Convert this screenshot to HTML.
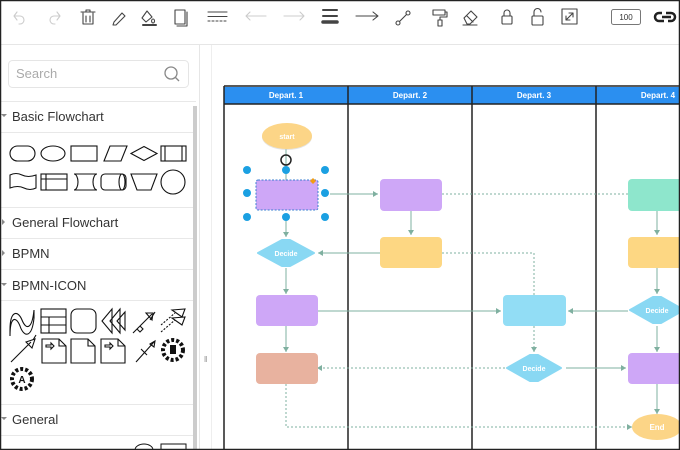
<!DOCTYPE html>
<html><head><meta charset="utf-8"><style>
html,body{margin:0;padding:0;width:680px;height:450px;overflow:hidden;background:#fff;font-family:"Liberation Sans",sans-serif}
svg{display:block}
</style></head><body>
<svg width="680" height="450" viewBox="0 0 680 450" xmlns="http://www.w3.org/2000/svg" font-family="Liberation Sans, sans-serif">
<rect x="0" y="0" width="680" height="450" fill="#fff"/>
<line x1="0" y1="44.5" x2="680" y2="44.5" stroke="#e6e6e6"/>
<g fill="none" stroke="#444" stroke-width="1.1" stroke-linecap="round" stroke-linejoin="round">
 <g stroke="#ccc"><path d="M17 12 l-3 4 3 4 M14 16 h6 a4 4 0 0 1 0 8 h-1"/><path d="M57 12 l3 4 -3 4 M60 16 h-6 a4 4 0 0 0 0 8 h1"/></g>
 <path d="M81 12 h14 M86 12 v-2 h4 v2 M83 13 v11 h10 v-11 M86 16 v6 M90 16 v6"/>
 <path d="M114 22 l8-9 3 3 -9 9 h-3 z"/>
 <path d="M147 11 l-5 7 4 4 6-5 z M153 19 a1.5 2 0 1 0 .1 0"/><path d="M143 25 h13" stroke-width="2"/>
 <path d="M175 10 h10 v14 h-10 z M177 26 h10 v-14"/>
 <path d="M208 12 h19 M208 16.5 h19" /><path d="M208 21 h19" stroke-dasharray="2 2"/>
 <g stroke="#ccc"><path d="M246 16 h20 M250 12 l-4 4 4 4"/><path d="M284 16 h20 M300 12 l4 4 -4 4"/></g>
 <path d="M323 10 h14 M323 16 h14" stroke-width="2"/><path d="M323 22 h14" stroke-width="3.5"/>
 <path d="M356 16 h22 M373 12 l5 4 -5 4"/>
 <path d="M398 23 l10-10"/><circle cx="398" cy="23" r="2" fill="#fff"/><circle cx="408" cy="13" r="2" fill="#fff"/>
 <path d="M433 10 h12 v5 h-12 z M445 12 h2 v5 h-7 v3 M438 20 h4 v6 h-4 z"/>
 <path d="M464 18 l7-7 6 6 -7 7 h-3 z M467 16 l6 6 M463 25 h14"/>
 <rect x="502" y="16" width="10" height="8" rx="1"/><path d="M504 16 v-3 a3 3 0 0 1 6 0 v3"/>
 <rect x="532" y="16" width="11" height="9" rx="1"/><path d="M534 16 v-4 a3.5 3.5 0 0 1 7 0"/>
 <rect x="562" y="9" width="15" height="15"/><path d="M566 20 l7-7 M569 13 h4 v4 M566 16 v4 h4"/>
</g>
<rect x="611.5" y="9.5" width="29" height="15" rx="2" fill="#fff" stroke="#777"/>
<text x="626" y="20" font-size="8" text-anchor="middle" fill="#333">100</text>
<path d="M662 13 h-3 a4 4 0 0 0 0 8 h5 M668 21 h3 a4 4 0 0 0 0-8 h-5 M662 17 h9" fill="none" stroke="#222" stroke-width="2.5"/>

<rect x="8.5" y="60.5" width="180" height="27" rx="4" fill="#fff" stroke="#e5e5e5"/>
<text x="16" y="78" font-size="13" fill="#aaa">Search</text>
<circle cx="171" cy="73" r="6" fill="none" stroke="#888" stroke-width="1.3"/><path d="M175 77 l4 4" stroke="#888" stroke-width="1.3"/>
<g stroke="#e8e8e8">
<line x1="0" y1="101.5" x2="196" y2="101.5"/><line x1="0" y1="132.5" x2="193" y2="132.5"/>
<line x1="0" y1="207.5" x2="193" y2="207.5"/><line x1="0" y1="238.5" x2="193" y2="238.5"/>
<line x1="0" y1="269.5" x2="193" y2="269.5"/><line x1="0" y1="300.5" x2="193" y2="300.5"/>
<line x1="0" y1="404.5" x2="193" y2="404.5"/><line x1="0" y1="435.5" x2="193" y2="435.5"/>
</g>
<g font-size="13" fill="#333">
<text x="12" y="121">Basic Flowchart</text><text x="12" y="227">General Flowchart</text>
<text x="12" y="258">BPMN</text><text x="12" y="290">BPMN-ICON</text><text x="12" y="424">General</text>
</g>
<g fill="#888"><path d="M1 114 l3 3 3-3z M1 283 l3 3 3-3z M1 417 l3 3 3-3z"/><path d="M2 219 l3 3 -3 3z M2 250 l3 3 -3 3z"/></g>
<rect x="193" y="106" width="4" height="344" fill="#ccc"/>
<g fill="none" stroke="#111" stroke-width="1.1">
 <rect x="10" y="146" width="25" height="15" rx="7.5"/><ellipse cx="53" cy="153.5" rx="12" ry="7.5"/>
 <rect x="71" y="146" width="26" height="15"/><path d="M104 161 l6-15 h17 l-6 15z"/>
 <path d="M131 153.5 l13-7 13 7 -13 7z"/><rect x="161" y="146" width="25" height="15"/><path d="M165 146 v15 M182 146 v15"/>
 <path d="M10 175 q6-3 12 0 t14 0 v13 q-6 3-12 0 t-14 0 z"/>
 <rect x="41" y="174" width="26" height="16"/><path d="M46 174 v16 M41 179 h26"/>
 <path d="M74 174 h23 a4 8 0 0 0 0 16 h-23 a4 8 0 0 0 0-16z"/>
 <rect x="101" y="174" width="25" height="16" rx="4"/><ellipse cx="122" cy="182" rx="3" ry="8"/>
 <path d="M131 174 h26 l-6 16 h-14z"/><circle cx="173" cy="182" r="12"/>
 <path d="M10 330 c0-20 8-20 12-10 c4 10 10 10 12-10 v8 c-2 20-10 20-14 8 c-4-10-10-10-10 10z"/>
 <rect x="41" y="309" width="25" height="24"/><path d="M41 317 h25 M41 325 h25 M49 317 v16"/>
 <rect x="71" y="309" width="25" height="24" rx="6"/>
 <path d="M102 321 l10-12 v24z M110 321 l10-12 v24z M117 321 l8-9 v18z"/>
 <path d="M133 333 l4-4 M137 329 l3 3 3-3 -3-3z M140 326 l12-12 M146 313 l7 0 -1 7z M150 320 l5-8"/>
 <path d="M161 325 l14-12 M161 332 l14-12" stroke-dasharray="2 1.5"/><path d="M172 310 l13 -1 -3 8z M172 318 l13-1 -3 8z"/>
 <path d="M11 362 l20-20 M26 342 l9-3 -3 9z M33 340 l3-5"/>
 <path d="M42 339 h17 l7 7 v17 h-24z M59 339 v7 h7 M46 345 h5 v-2 l3 3 -3 3 v-2 h-5z"/>
 <path d="M71 339 h17 l7 7 v17 h-24z M88 339 v7 h7"/>
 <path d="M101 339 h17 l7 7 v17 h-24z M118 339 v7 h7 M105 345 h5 v-2 l3 3 -3 3 v-2 h-5z"/>
 <path d="M136 362 l18-20 M150 344 l5-3 -1 6z M141 349 l6 6"/>
 <circle cx="173" cy="350" r="10" stroke-width="4" stroke-dasharray="3 2"/>
 <circle cx="22" cy="379" r="10" stroke-width="4" stroke-dasharray="3 2"/>
</g>
<rect x="170" y="345" width="6" height="9" fill="#111"/>
<text x="22" y="383" font-size="10" font-weight="bold" text-anchor="middle" fill="#111">A</text>
<g fill="none" stroke="#111"><rect x="161" y="444" width="25" height="8"/><path d="M135 450 a9 6 0 0 1 18 0"/></g>

<line x1="199.5" y1="45" x2="199.5" y2="450" stroke="#e6e6e6"/>
<line x1="211.5" y1="45" x2="211.5" y2="450" stroke="#eee"/>
<text x="204" y="362" font-size="8" fill="#888">‖</text>

<rect x="224" y="87" width="460" height="17" fill="#2b8ff0"/>
<g stroke="#222" stroke-width="1.5" fill="none">
 <path d="M224 86 h460 M224 104 h460 M224 86 v370"/>
 <path d="M348 86 v370 M472 86 v370 M596 86 v370"/>
</g>
<g font-size="8" font-weight="bold" fill="#fff" text-anchor="middle">
 <text x="286" y="98">Depart. 1</text><text x="410" y="98">Depart. 2</text>
 <text x="534" y="98">Depart. 3</text><text x="658" y="98">Depart. 4</text>
</g>

<g fill="none" stroke="#7fb0a0" stroke-width="1">
 <path d="M286 149 v31 M286 217 v20 M286 268 v26 M286 326 v26"/>
 <path d="M330 194 h48 M411 211 v24 M380 253 h-62 M318 311 h183 M628 311 h-60 M566 368 h60 M657 211 v24 M657 268 v26 M657 326 v26 M657 384 v30"/>
 <g stroke-dasharray="2 2"><path d="M442 194 h186 M442 253 h92 v42 M534 326 v26 M505 368 h-188 M286 384 v43 h346"/></g>
</g>
<g fill="#7fb0a0">
 <path d="M378 194 l-5-3 v6z M318 253 l5-3 v6z M286 237 l-3-5 h6z M286 294 l-3-5 h6z M286 352 l-3-5 h6z M411 235 l-3-5 h6z M501 311 l-5-3 v6z M568 311 l5-3 v6z M534 352 l-3-5 h6z M317 368 l5-3 v6z M626 368 l-5-3 v6z M632 427 l-5-3 v6z M657 235 l-3-5 h6z M657 294 l-3-5 h6z M657 352 l-3-5 h6z M657 414 l-3-5 h6z"/>
</g>

<g>
 <ellipse cx="287" cy="137" rx="25" ry="13" fill="#c9c9c9" opacity=".5"/>
 <ellipse cx="287" cy="136" rx="25" ry="13" fill="#fcd587"/>
 <text x="287" y="139" font-size="7" font-weight="bold" fill="#fff" text-anchor="middle">start</text>
 <rect x="256" y="180" width="62" height="30" rx="2" fill="#cea7f7" stroke="#3a7fd0" stroke-dasharray="2 1.5"/>
 <path d="M313 178 l3 3 -3 3 -3-3z" fill="#f39c12"/>
 <circle cx="286" cy="160" r="5" fill="none" stroke="#222" stroke-width="1.5"/>
 <g fill="#1ba0e2"><circle cx="247" cy="170" r="4"/><circle cx="286" cy="170" r="4"/><circle cx="325" cy="170" r="4"/>
 <circle cx="247" cy="193" r="4"/><circle cx="325" cy="193" r="4"/>
 <circle cx="247" cy="217" r="4"/><circle cx="286" cy="217" r="4"/><circle cx="325" cy="217" r="4"/></g>

 <path d="M258 253 l24-13 h8 l24 13 -24 13 h-8z" fill="#89d8f3" stroke="#89d8f3" stroke-width="2" stroke-linejoin="round"/>
 <text x="286" y="256" font-size="7" font-weight="bold" fill="#fff" text-anchor="middle">Decide</text>
 <rect x="256" y="295" width="62" height="31" rx="4" fill="#cea7f7"/>
 <rect x="256" y="353" width="62" height="31" rx="4" fill="#e8b29f"/>

 <rect x="380" y="179" width="62" height="32" rx="4" fill="#cea7f7"/>
 <rect x="380" y="237" width="62" height="31" rx="4" fill="#fdd783"/>

 <rect x="503" y="295" width="63" height="31" rx="4" fill="#92ddf5"/>
 <path d="M507 368 l23-13 h8 l23 13 -23 13 h-8z" fill="#89d8f3" stroke="#89d8f3" stroke-width="2" stroke-linejoin="round"/>
 <text x="534" y="371" font-size="7" font-weight="bold" fill="#fff" text-anchor="middle">Decide</text>

 <rect x="628" y="179" width="60" height="32" rx="4" fill="#8ee6cc"/>
 <rect x="628" y="237" width="60" height="31" rx="4" fill="#fdd783"/>
 <path d="M630 310 l23-13 h8 l23 13 -23 13 h-8z" fill="#89d8f3" stroke="#89d8f3" stroke-width="2" stroke-linejoin="round"/>
 <text x="657" y="313" font-size="7" font-weight="bold" fill="#fff" text-anchor="middle">Decide</text>
 <rect x="628" y="353" width="60" height="31" rx="4" fill="#cea7f7"/>
 <ellipse cx="657" cy="427" rx="25" ry="13" fill="#fcd587"/>
 <text x="657" y="430" font-size="8" font-weight="bold" fill="#fff" text-anchor="middle">End</text>
</g>

<rect x="0.5" y="0.5" width="679" height="449" fill="none" stroke="#222" stroke-width="1.5"/>
</svg>
</body></html>
